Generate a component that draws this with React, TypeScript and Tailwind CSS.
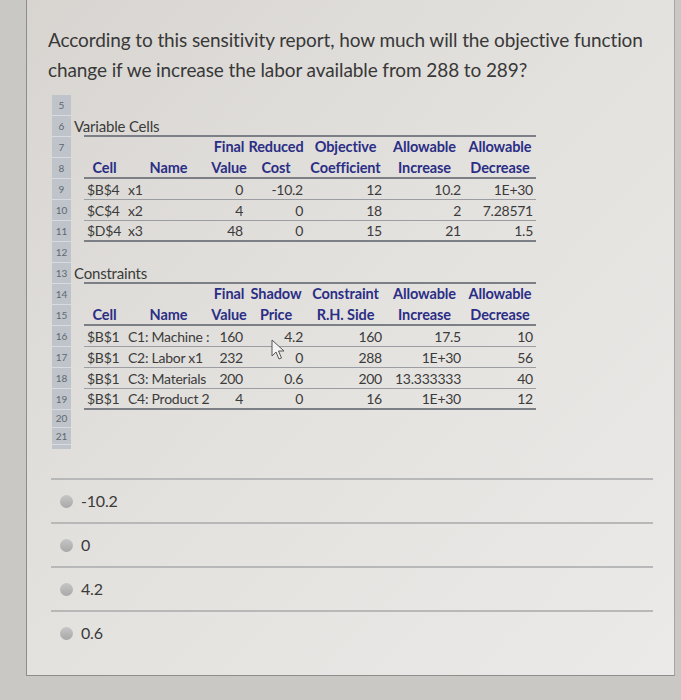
import React from "react";

type Kind = "empty" | "title" | "head" | "data";
type Row = { n: number; kind: Kind; cells?: string[]; title?: string; border?: "thick" | "thin" | "none"; h?: string };

const colW = ["w-[41px]", "w-[87px]", "w-[34px]", "w-[60px]", "w-[79px]", "w-[79px]", "w-[72px]"];

const rows: Row[] = [
  { n: 5, kind: "empty" },
  { n: 6, kind: "title", title: "Variable Cells", border: "thick" },
  { n: 7, kind: "head", cells: ["", "", "Final", "Reduced", "Objective", "Allowable", "Allowable"] },
  { n: 8, kind: "head", cells: ["Cell", "Name", "Value", "Cost", "Coefficient", "Increase", "Decrease"], border: "thick" },
  { n: 9, kind: "data", cells: ["$B$4", "x1", "0", "-10.2", "12", "10.2", "1E+30"], border: "thin" },
  { n: 10, kind: "data", cells: ["$C$4", "x2", "4", "0", "18", "2", "7.28571"], border: "thin" },
  { n: 11, kind: "data", cells: ["$D$4", "x3", "48", "0", "15", "21", "1.5"], border: "thick" },
  { n: 12, kind: "empty" },
  { n: 13, kind: "title", title: "Constraints", border: "thick" },
  { n: 14, kind: "head", cells: ["", "", "Final", "Shadow", "Constraint", "Allowable", "Allowable"] },
  { n: 15, kind: "head", cells: ["Cell", "Name", "Value", "Price", "R.H. Side", "Increase", "Decrease"], border: "thick" },
  { n: 16, kind: "data", cells: ["$B$1", "C1: Machine :", "160", "4.2", "160", "17.5", "10"], border: "thin" },
  { n: 17, kind: "data", cells: ["$B$1", "C2: Labor x1", "232", "0", "288", "1E+30", "56"], border: "thin" },
  { n: 18, kind: "data", cells: ["$B$1", "C3: Materials", "200", "0.6", "200", "13.333333", "40"], border: "thin" },
  { n: 19, kind: "data", cells: ["$B$1", "C4: Product 2", "4", "0", "16", "1E+30", "12"], border: "thick" },
  { n: 20, kind: "empty", h: "h-[18px]" },
  { n: 21, kind: "empty", h: "h-[17px]" },
];

function SheetRow({ r }: { r: Row }) {
  const h = r.h ?? "h-[21px]";
  const borderCls =
    r.border === "thick"
      ? "border-b-2 border-[#7d7f86]"
      : r.border === "thin"
      ? "border-b border-[#9c9da2]"
      : "border-b border-transparent";
  return (
    <div className={`flex ${h}`}>
      <div className={`w-[19px] ${h} shrink-0 bg-[#bec4ca] border-b border-[#d8dbdf] flex items-center justify-center text-[10px] text-[#5f6871]`}>
        {r.n}
      </div>
      <div className="w-[13px] shrink-0 relative">
        {r.kind === "title" && (
          <div className="absolute left-[3px] top-0 h-full flex items-center whitespace-nowrap text-[15px] text-[#3a3a3a] tracking-[-0.2px]">
            {r.title}
          </div>
        )}
      </div>
      <div className={`flex w-[452px] box-border ${r.kind === "empty" ? "" : borderCls}`}>
        {r.kind === "head" &&
          r.cells!.map((c, i) => (
            <div key={i} className={`${colW[i]} shrink-0 flex items-center justify-center whitespace-nowrap text-[14.5px] font-bold text-[#2b2e85] tracking-[-0.1px]`}>
              {c}
            </div>
          ))}
        {r.kind === "data" &&
          r.cells!.map((c, i) => (
            <div
              key={i}
              className={`${colW[i]} shrink-0 flex items-center whitespace-nowrap text-[14px] text-[#3b3b3b] tracking-[-0.25px] ${
                i < 2 ? "justify-start pl-[3px]" : "justify-end pr-[3px]"
              } ${i === 1 ? "pl-[1px]" : ""}`}
            >
              {c}
            </div>
          ))}
      </div>
    </div>
  );
}

function Cursor() {
  return (
    <svg className="absolute left-[271px] top-[339px]" width="14" height="22" viewBox="0 0 14 22">
      <path d="M1 1 L1 17 L5 13 L8 20 L10.5 19 L7.5 12 L13 12 Z" fill="#f4f4f4" stroke="#555" strokeWidth="1" strokeLinejoin="round" />
    </svg>
  );
}

const options = ["-10.2", "0", "4.2", "0.6"];

export default function App() {
  return (
    <div className="w-[681px] h-[700px] overflow-hidden relative bg-[#cac8c5] pl-[26px] font-['Lato',sans-serif]">
      <div className="w-[649px] h-[676px] border-l border-r border-b border-l-[#8d8d8d] border-b-[#8d8d8d] border-r-[#a5a5a5] bg-gradient-to-br from-[#d8d5d1] via-[#e4e2df] to-[#ebeae8] relative">
        <div className="pl-[21px] pt-[25px] text-[19px] leading-[30px] text-[#383838] tracking-[-0.1px]">
          <div>According to this sensitivity report, how much will the objective function</div>
          <div>change if we increase the labor available from 288 to 289?</div>
        </div>
        <div className="ml-[25px] mt-[10px] w-[500px]">
          {rows.map((r) => (
            <SheetRow key={r.n} r={r} />
          ))}
          <div className="w-[19px] h-[4px] bg-[#bec4ca]" />
        </div>
        <div className="ml-[24px] mt-[29px] w-[602px]">
          {options.map((o) => (
            <div key={o} className="border-t-2 border-[#b8b8b8] h-[44px] flex items-center">
              <div className="ml-[9px] w-[13px] h-[13px] rounded-full bg-gradient-to-b from-[#c6c6c6] to-[#a8a8a8]" />
              <div className="ml-[8px] text-[16px] text-[#3a3a3a] tracking-[-0.2px]">{o}</div>
            </div>
          ))}
        </div>
      </div>
      <Cursor />
    </div>
  );
}
